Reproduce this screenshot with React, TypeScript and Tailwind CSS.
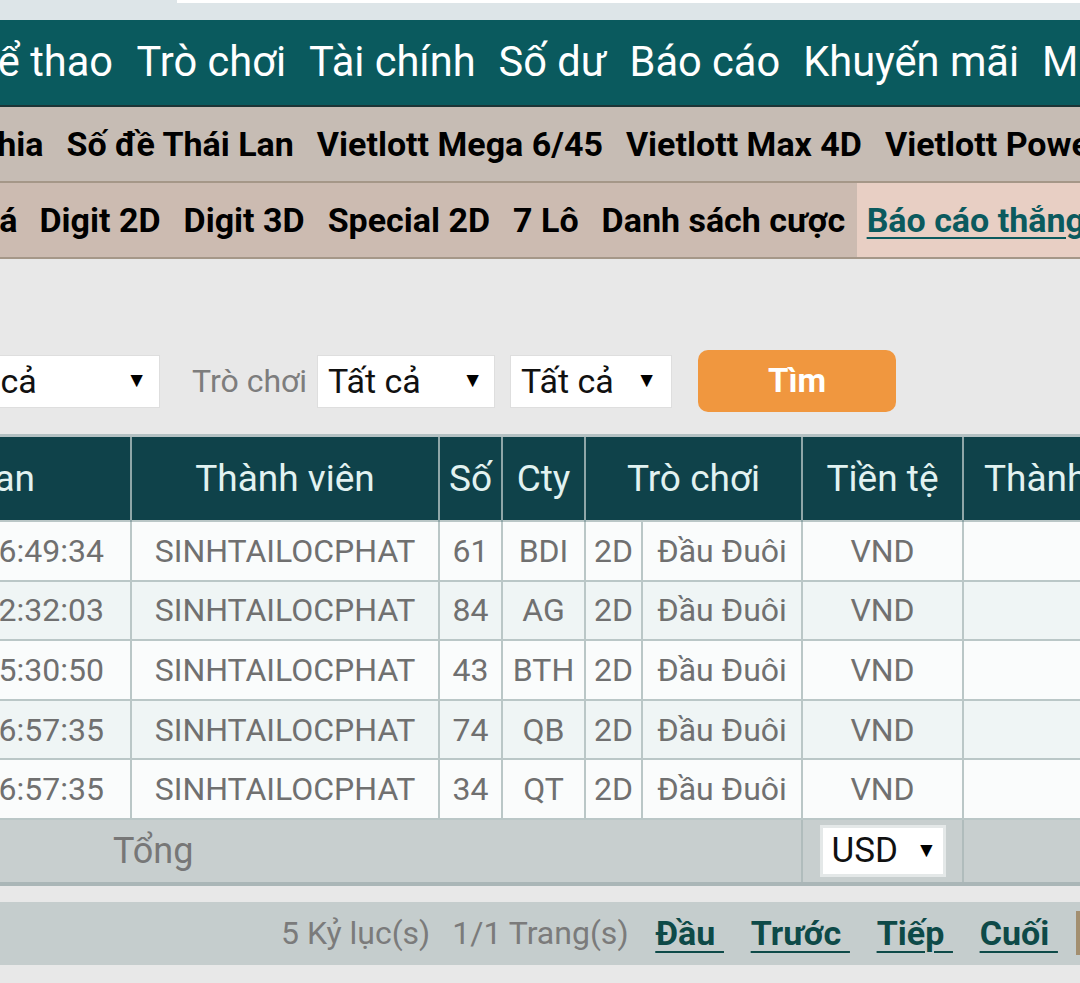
import React from 'react'

const mainNav = ['Trò chơi', 'Tài chính', 'Số dư', 'Báo cáo', 'Khuyến mãi', 'Mini game']
const lotteryNav = ['Số đề Thái Lan', 'Vietlott Mega 6/45', 'Vietlott Max 4D', 'Vietlott Power 6/55']
const betNav = ['Digit 2D', 'Digit 3D', 'Special 2D', '7 Lô', 'Danh sách cược']

const rows = [
  { time: '2024-05-12 16:49:34', num: '61', cty: 'BDI' },
  { time: '2024-05-12 12:32:03', num: '84', cty: 'AG' },
  { time: '2024-05-12 15:30:50', num: '43', cty: 'BTH' },
  { time: '2024-05-12 16:57:35', num: '74', cty: 'QB' },
  { time: '2024-05-12 16:57:35', num: '34', cty: 'QT' },
]

function Select({ value, className }: { value: string; className: string }) {
  return (
    <div className={`flex items-center justify-between bg-white border border-[#dedede] h-[53px] text-[34px] text-[#111] overflow-hidden ${className}`}>
      <span className="whitespace-nowrap">{value}</span>
      <span className="text-[21px] text-black">▼</span>
    </div>
  )
}

// first tab of a row that runs off the left edge: keep only its tail visible
function Clipped({ label, width, pad }: { label: string; width: string; pad: string }) {
  return (
    <span className={`flex items-center justify-end overflow-hidden shrink-0 ${width} ${pad}`}>
      <span className="shrink-0">{label}</span>
    </span>
  )
}

export default function App() {
  return (
    <div className="w-[1080px] h-[983px] overflow-hidden bg-[#e8e8e8] font-['Roboto','Noto_Sans',sans-serif]">
      {/* top strip */}
      <div className="h-[20px] bg-[#dde5e8]">
        <div className="ml-[177px] h-[3px] bg-white" />
      </div>

      {/* main nav */}
      <div className="h-[87px] bg-[#0a5a5e] border-b-[2px] border-[#1c3436] flex items-stretch whitespace-nowrap text-white text-[41.6px] overflow-hidden">
        <Clipped label="Thể thao" width="w-[125px]" pad="pr-[12px]" />
        {mainNav.map((item) => (
          <span key={item} className="px-[11.5px] flex items-center shrink-0">{item}</span>
        ))}
      </div>

      {/* lottery nav */}
      <div className="h-[76px] bg-[#c6bcb4] border-b-[2px] border-[#a59788] flex items-stretch whitespace-nowrap text-black font-bold text-[34px] overflow-hidden">
        <Clipped label="Campuchia" width="w-[55px]" pad="pr-[11.5px]" />
        {lotteryNav.map((item) => (
          <span key={item} className="px-[11.5px] flex items-center shrink-0">{item}</span>
        ))}
      </div>

      {/* bet nav */}
      <div className="h-[76px] bg-[#ccbbb1] border-b-[2px] border-[#a59788] flex items-stretch whitespace-nowrap text-black font-bold text-[34px] overflow-hidden">
        <Clipped label="Lô Đá" width="w-[28px]" pad="pr-[10.5px]" />
        {betNav.map((item) => (
          <span key={item} className="px-[11.5px] flex items-center shrink-0">{item}</span>
        ))}
        <span className="px-[10px] flex items-center shrink-0 bg-[#e8cfc4] text-[#0b5a5e] underline underline-offset-[5px] decoration-[2px]">
          Báo cáo thắng thua
        </span>
      </div>

      {/* filters */}
      <div className="mt-[89px] h-[66px] flex items-center whitespace-nowrap">
        <Select value="Tất cả" className="w-[229px] -ml-[69px] pl-[12px] pr-[12px] shrink-0" />
        <span className="ml-[32px] text-[32px] text-[#7d7d7d]">Trò chơi</span>
        <Select value="Tất cả" className="ml-[10px] w-[178px] pl-[10px] pr-[11px]" />
        <Select value="Tất cả" className="ml-[15px] w-[162px] pl-[10px] pr-[14px]" />
        <button className="ml-[26px] w-[198px] h-[62px] rounded-[10px] bg-[#f0973f] text-white font-bold text-[33px]">
          Tìm
        </button>
      </div>

      {/* table */}
      <div className="mt-[20px] w-[1300px] border-t-[3px] border-[#b3c0c2]">
        <table className="table-fixed border-collapse w-[1300px] text-[32px]">
          <colgroup>
            <col className="w-[131px]" />
            <col className="w-[308px]" />
            <col className="w-[63px]" />
            <col className="w-[83px]" />
            <col className="w-[57px]" />
            <col className="w-[160px]" />
            <col className="w-[161px]" />
            <col className="w-[337px]" />
          </colgroup>
          <thead>
            <tr className="h-[84px] bg-[#0f424a] text-[#e2f2f1] text-[37px]">
              <th className="font-normal border-r-[2px] border-[#8fa6a8] p-0">
                <div className="flex justify-end overflow-hidden pr-[95px] whitespace-nowrap">Thời gian</div>
              </th>
              <th className="font-normal border-r-[2px] border-[#8fa6a8]">Thành viên</th>
              <th className="font-normal border-r-[2px] border-[#8fa6a8] px-0">Số</th>
              <th className="font-normal border-r-[2px] border-[#8fa6a8] px-0">Cty</th>
              <th colSpan={2} className="font-normal border-r-[2px] border-[#8fa6a8]">Trò chơi</th>
              <th className="font-normal border-r-[2px] border-[#8fa6a8]">Tiền tệ</th>
              <th className="font-normal text-left pl-[20px] whitespace-nowrap">Thành tiền</th>
            </tr>
          </thead>
          <tbody className="text-[#707070]">
            {rows.map((r, i) => (
              <tr key={i} className={`h-[59.6px] ${i % 2 === 0 ? 'bg-[#fafcfc]' : 'bg-[#eff5f5]'}`}>
                <td className="border-[2px] border-l-0 border-[#bac7c7] p-0">
                  <div className="flex justify-end overflow-hidden pr-[26px] whitespace-nowrap">{r.time}</div>
                </td>
                <td className="border-[2px] border-[#bac7c7] text-center px-0 whitespace-nowrap">SINHTAILOCPHAT</td>
                <td className="border-[2px] border-[#bac7c7] text-center px-0">{r.num}</td>
                <td className="border-[2px] border-[#bac7c7] text-center px-0">{r.cty}</td>
                <td className="border-[2px] border-[#bac7c7] text-center px-0">2D</td>
                <td className="border-[2px] border-[#bac7c7] text-center px-0 whitespace-nowrap">Đầu Đuôi</td>
                <td className="border-[2px] border-[#bac7c7] text-center">VND</td>
                <td className="border-[2px] border-r-0 border-[#bac7c7]" />
              </tr>
            ))}
            <tr className="h-[65px] bg-[#c8cfcf] border-b-[4px] border-[#aab6b7]">
              <td colSpan={6} className="border-r-[2px] border-[#b0bcbc] text-[36px] text-[#777] pl-[113px]">Tổng</td>
              <td className="border-r-[2px] border-[#b0bcbc] p-0">
                <div className="flex justify-center">
                  <div className="flex items-center gap-[18px] bg-white border-[3px] border-[#e4e8e8] h-[52px] w-[126px] pl-[9px] text-[35px] text-[#111]">
                    <span>USD</span>
                    <span className="text-[21px] text-black">▼</span>
                  </div>
                </div>
              </td>
              <td />
            </tr>
          </tbody>
        </table>
      </div>

      {/* pagination */}
      <div className="mt-[16px] h-[63px] bg-[#c5cdcd] flex items-center whitespace-nowrap">
        <span className="ml-[281px] text-[32px] text-[#7b7b7b]">5 Kỷ lục(s)</span>
        <span className="ml-[22px] text-[32px] text-[#7b7b7b]">1/1 Trang(s)</span>
        <div className="ml-[27px] flex gap-[27px] text-[34px] font-bold text-[#0e4a48] underline underline-offset-[6px] decoration-[2px]">
          <a href="#">Đầu&nbsp;</a>
          <a href="#">Trước&nbsp;</a>
          <a href="#">Tiếp&nbsp;</a>
          <a href="#">Cuối&nbsp;</a>
        </div>
        <div className="ml-auto w-[4px] h-[44px] bg-[#a38f70]" />
      </div>
    </div>
  )
}
